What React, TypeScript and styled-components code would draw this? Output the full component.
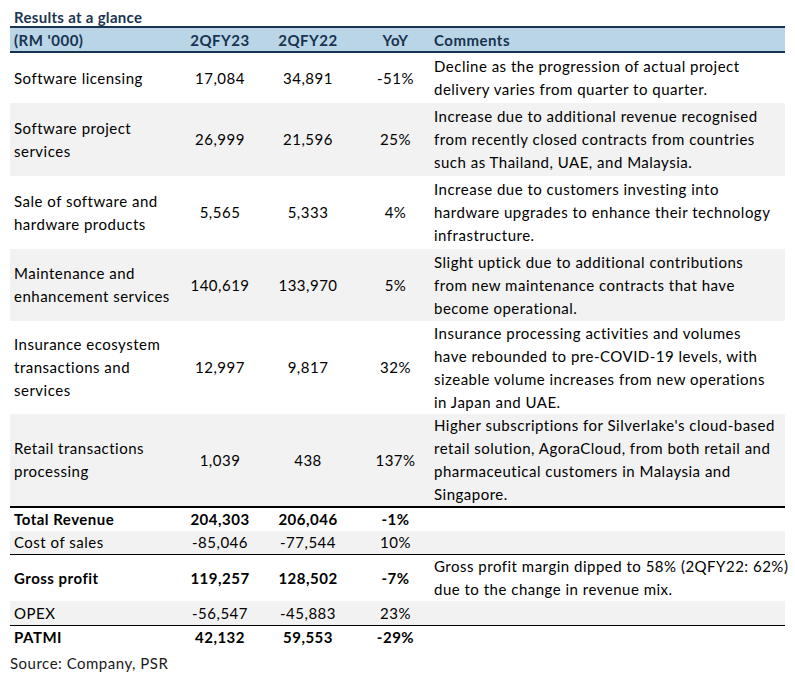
import React from "react";
import styled, { createGlobalStyle } from "styled-components";

const Global = createGlobalStyle`
  html, body { margin: 0; padding: 0; background: #ffffff; }
  body { font-family: "Lato", "Liberation Sans", sans-serif; color: #000; letter-spacing: 0.5px; }
`;

const COLS = "175px 70px 106px 69px 1fr";

const Page = styled.div`
  width: 775px;
  padding: 7px 10px 0 10px;
`;

const Title = styled.div`
  font-size: 15px;
  font-weight: 700;
  color: #1b3553;
  padding-left: 4px;
  height: 19px;
  line-height: 20px;
  letter-spacing: 0.3px;
`;

const HeaderRow = styled.div`
  display: grid;
  grid-template-columns: ${COLS};
  align-items: center;
  height: 23px;
  background: #b9d5e6;
  border-top: 2px solid #173350;
  border-bottom: 2px solid #173350;
  font-weight: 700;
  font-size: 15px;
  color: #173350;
`;

const Row = styled.div<{ $gray?: boolean; $h: number; $topRule?: number; $bottomRule?: boolean }>`
  display: grid;
  grid-template-columns: ${COLS};
  align-items: center;
  min-height: ${(p) => p.$h}px;
  background: ${(p) => (p.$gray ? "#f2f2f2" : "#ffffff")};
  border-top: ${(p) => (p.$topRule ? `${p.$topRule}px solid #000` : "none")};
  border-bottom: ${(p) => (p.$bottomRule ? "1px solid #000" : "none")};
  font-size: 15px;
  line-height: 23px;
`;

const Label = styled.div<{ $bold?: boolean }>`
  padding-left: 4px;
  font-weight: ${(p) => (p.$bold ? 700 : 400)};
  white-space: nowrap;
`;

const Num = styled.div<{ $bold?: boolean }>`
  text-align: center;
  font-weight: ${(p) => (p.$bold ? 700 : 400)};
  white-space: nowrap;
`;

const Comment = styled.div`
  padding-left: 4px;
  white-space: nowrap;
`;

const HeadCell = styled.div<{ $center?: boolean }>`
  padding-left: ${(p) => (p.$center ? "0" : "4px")};
  text-align: ${(p) => (p.$center ? "center" : "left")};
`;

const Source = styled.div`
  font-size: 15px;
  color: #1a1a1a;
  line-height: 23px;
  padding-top: 3px;
`;

type R = {
  label: string[];
  a: string;
  b: string;
  y: string;
  c: string[];
  h: number;
  gray?: boolean;
  bold?: boolean;
  topRule?: number;
  bottomRule?: boolean;
};

const rows: R[] = [
  {
    label: ["Software licensing"],
    a: "17,084",
    b: "34,891",
    y: "-51%",
    c: ["Decline as the progression of actual project", "delivery varies from quarter to quarter."],
    h: 50,
  },
  {
    label: ["Software project", "services"],
    a: "26,999",
    b: "21,596",
    y: "25%",
    c: [
      "Increase due to additional revenue recognised",
      "from recently closed contracts from countries",
      "such as Thailand, UAE, and Malaysia.",
    ],
    h: 73,
    gray: true,
  },
  {
    label: ["Sale of software and", "hardware products"],
    a: "5,565",
    b: "5,333",
    y: "4%",
    c: [
      "Increase due to customers investing into",
      "hardware upgrades to enhance their technology",
      "infrastructure.",
    ],
    h: 73,
  },
  {
    label: ["Maintenance and", "enhancement services"],
    a: "140,619",
    b: "133,970",
    y: "5%",
    c: [
      "Slight uptick due to additional contributions",
      "from new maintenance contracts that have",
      "become operational.",
    ],
    h: 72,
    gray: true,
  },
  {
    label: ["Insurance ecosystem", "transactions and", "services"],
    a: "12,997",
    b: "9,817",
    y: "32%",
    c: [
      "Insurance processing activities and volumes",
      "have rebounded to pre-COVID-19 levels, with",
      "sizeable volume increases from new operations",
      "in Japan and UAE.",
    ],
    h: 93,
  },
  {
    label: ["Retail transactions", "processing"],
    a: "1,039",
    b: "438",
    y: "137%",
    c: [
      "Higher subscriptions for Silverlake's cloud-based",
      "retail solution, AgoraCloud, from both retail and",
      "pharmaceutical customers in Malaysia and",
      "Singapore.",
    ],
    h: 92,
    gray: true,
  },
  {
    label: ["Total Revenue"],
    a: "204,303",
    b: "206,046",
    y: "-1%",
    c: [],
    h: 23,
    bold: true,
    topRule: 2,
  },
  {
    label: ["Cost of sales"],
    a: "-85,046",
    b: "-77,544",
    y: "10%",
    c: [],
    h: 22,
    gray: true,
    bottomRule: true,
  },
  {
    label: ["Gross profit"],
    a: "119,257",
    b: "128,502",
    y: "-7%",
    c: ["Gross profit margin dipped to 58% (2QFY22: 62%)", "due to the change in revenue mix."],
    h: 45,
    bold: true,
  },
  {
    label: ["OPEX"],
    a: "-56,547",
    b: "-45,883",
    y: "23%",
    c: [],
    h: 24,
    gray: true,
    bottomRule: true,
  },
  {
    label: ["PATMI"],
    a: "42,132",
    b: "59,553",
    y: "-29%",
    c: [],
    h: 22,
    bold: true,
  },
];

const Lines = ({ lines }: { lines: string[] }) => (
  <>
    {lines.map((l, i) => (
      <div key={i}>{l}</div>
    ))}
  </>
);

export default function App() {
  return (
    <Page>
      <Global />
      <Title>Results at a glance</Title>
      <HeaderRow>
        <HeadCell>(RM '000)</HeadCell>
        <HeadCell $center>2QFY23</HeadCell>
        <HeadCell $center>2QFY22</HeadCell>
        <HeadCell $center>YoY</HeadCell>
        <HeadCell>Comments</HeadCell>
      </HeaderRow>
      {rows.map((r, i) => (
        <Row key={i} $gray={r.gray} $h={r.h} $topRule={r.topRule} $bottomRule={r.bottomRule}>
          <Label $bold={r.bold}>
            <Lines lines={r.label} />
          </Label>
          <Num $bold={r.bold}>{r.a}</Num>
          <Num $bold={r.bold}>{r.b}</Num>
          <Num $bold={r.bold}>{r.y}</Num>
          <Comment>
            <Lines lines={r.c} />
          </Comment>
        </Row>
      ))}
      <Source>Source: Company, PSR</Source>
    </Page>
  );
}
